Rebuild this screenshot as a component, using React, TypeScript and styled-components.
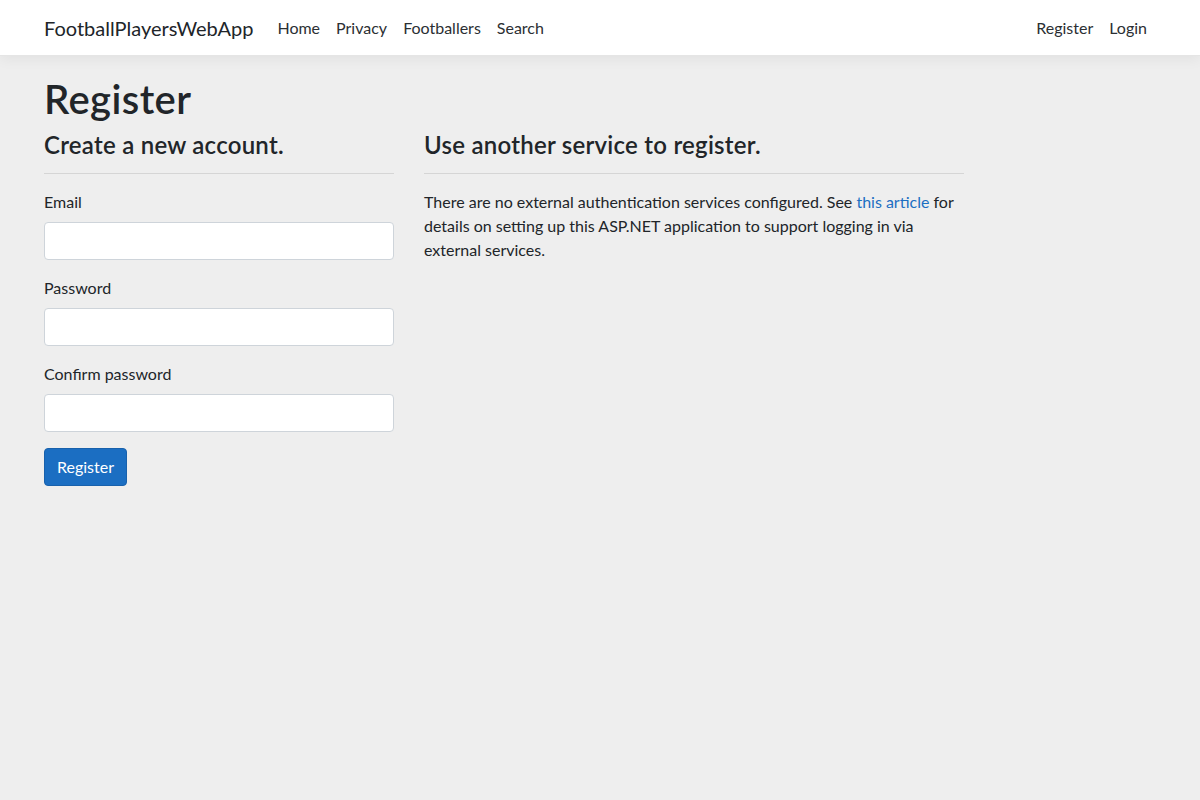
import React from "react";
import styled, { createGlobalStyle } from "styled-components";

const GlobalStyle = createGlobalStyle`
  *, *::before, *::after { box-sizing: border-box; }
  html, body { margin: 0; padding: 0; }
  body {
    background: #eeeeee;
    font-family: Lato, "Segoe UI", "Noto Sans", sans-serif;
    font-size: 16px;
    line-height: 1.5;
    color: #212529;
  }
`;

const NavBar = styled.header`
  background: #ffffff;
  height: 56px;
  box-shadow: 0 0.25rem 0.75rem rgba(0, 0, 0, 0.05);
  border-bottom: 1px solid #e5e5e5;
  margin-bottom: 16px;
`;

const NavInner = styled.nav`
  width: 1140px;
  margin: 0 auto;
  padding: 0 15px 0 14px;
  height: 100%;
  display: flex;
  align-items: center;
`;

const Brand = styled.a`
  font-size: 20px;
  line-height: 30px;
  color: #212529;
  text-decoration: none;
  margin-right: 16px;
`;

const NavList = styled.ul<{ $right?: boolean }>`
  list-style: none;
  margin: 0;
  padding: 0;
  display: flex;
  margin-left: ${(p) => (p.$right ? "auto" : "0")};
`;

const NavLink = styled.a`
  display: block;
  padding: 8px;
  font-size: 16px;
  line-height: 24px;
  color: #2b2f33;
  text-decoration: none;
`;

const Container = styled.main`
  width: 1140px;
  margin: 0 auto;
  padding: 0 15px 0 14px;
`;

const Title = styled.h1`
  font-size: 40px;
  font-weight: 600;
  line-height: 42px;
  letter-spacing: 0.4px;
  padding-top: 6px;
  margin: 0 0 8px;
`;

const Row = styled.div`
  display: grid;
  grid-template-columns: 350px 540px;
  column-gap: 30px;
`;

const SubTitle = styled.h4`
  font-size: 24px;
  font-weight: 600;
  line-height: 22.8px;
  letter-spacing: 0.25px;
  padding-top: 6px;
  margin: 0;
`;

const Rule = styled.hr`
  border: 0;
  border-top: 1px solid rgba(0, 0, 0, 0.1);
  margin: 16px 0;
`;

const Group = styled.div`
  margin-bottom: 16px;
`;

const Label = styled.label`
  display: block;
  margin-bottom: 8px;
`;

const Input = styled.input`
  display: block;
  width: 100%;
  height: 38px;
  padding: 6px 12px;
  font: inherit;
  color: #495057;
  background: #fff;
  border: 1px solid #ced4da;
  border-radius: 4px;
`;

const Button = styled.button`
  font-family: inherit;
  font-size: 16px;
  line-height: 24px;
  padding: 6px 12px;
  color: #fff;
  background: #1b6ec2;
  border: 1px solid #1861ac;
  border-radius: 4px;
  cursor: pointer;
`;

const Para = styled.p`
  margin: 0 0 16px;
`;

const Link = styled.a`
  color: #1b6ec2;
  text-decoration: none;
`;

export default function App() {
  return (
    <>
      <GlobalStyle />
      <NavBar>
        <NavInner>
          <Brand href="#">FootballPlayersWebApp</Brand>
          <NavList>
            <li><NavLink href="#">Home</NavLink></li>
            <li><NavLink href="#">Privacy</NavLink></li>
            <li><NavLink href="#">Footballers</NavLink></li>
            <li><NavLink href="#">Search</NavLink></li>
          </NavList>
          <NavList $right>
            <li><NavLink href="#">Register</NavLink></li>
            <li><NavLink href="#">Login</NavLink></li>
          </NavList>
        </NavInner>
      </NavBar>
      <Container>
        <Title>Register</Title>
        <Row>
          <form onSubmit={(e) => e.preventDefault()}>
            <SubTitle>Create a new account.</SubTitle>
            <Rule />
            <Group>
              <Label htmlFor="email">Email</Label>
              <Input id="email" type="email" />
            </Group>
            <Group>
              <Label htmlFor="pw">Password</Label>
              <Input id="pw" type="password" />
            </Group>
            <Group>
              <Label htmlFor="cpw">Confirm password</Label>
              <Input id="cpw" type="password" />
            </Group>
            <Button type="submit">Register</Button>
          </form>
          <section>
            <SubTitle>Use another service to register.</SubTitle>
            <Rule />
            <Para>
              There are no external authentication services configured. See{" "}
              <Link href="#">this article</Link> for details on setting up this ASP.NET
              application to support logging in via external services.
            </Para>
          </section>
        </Row>
      </Container>
    </>
  );
}
